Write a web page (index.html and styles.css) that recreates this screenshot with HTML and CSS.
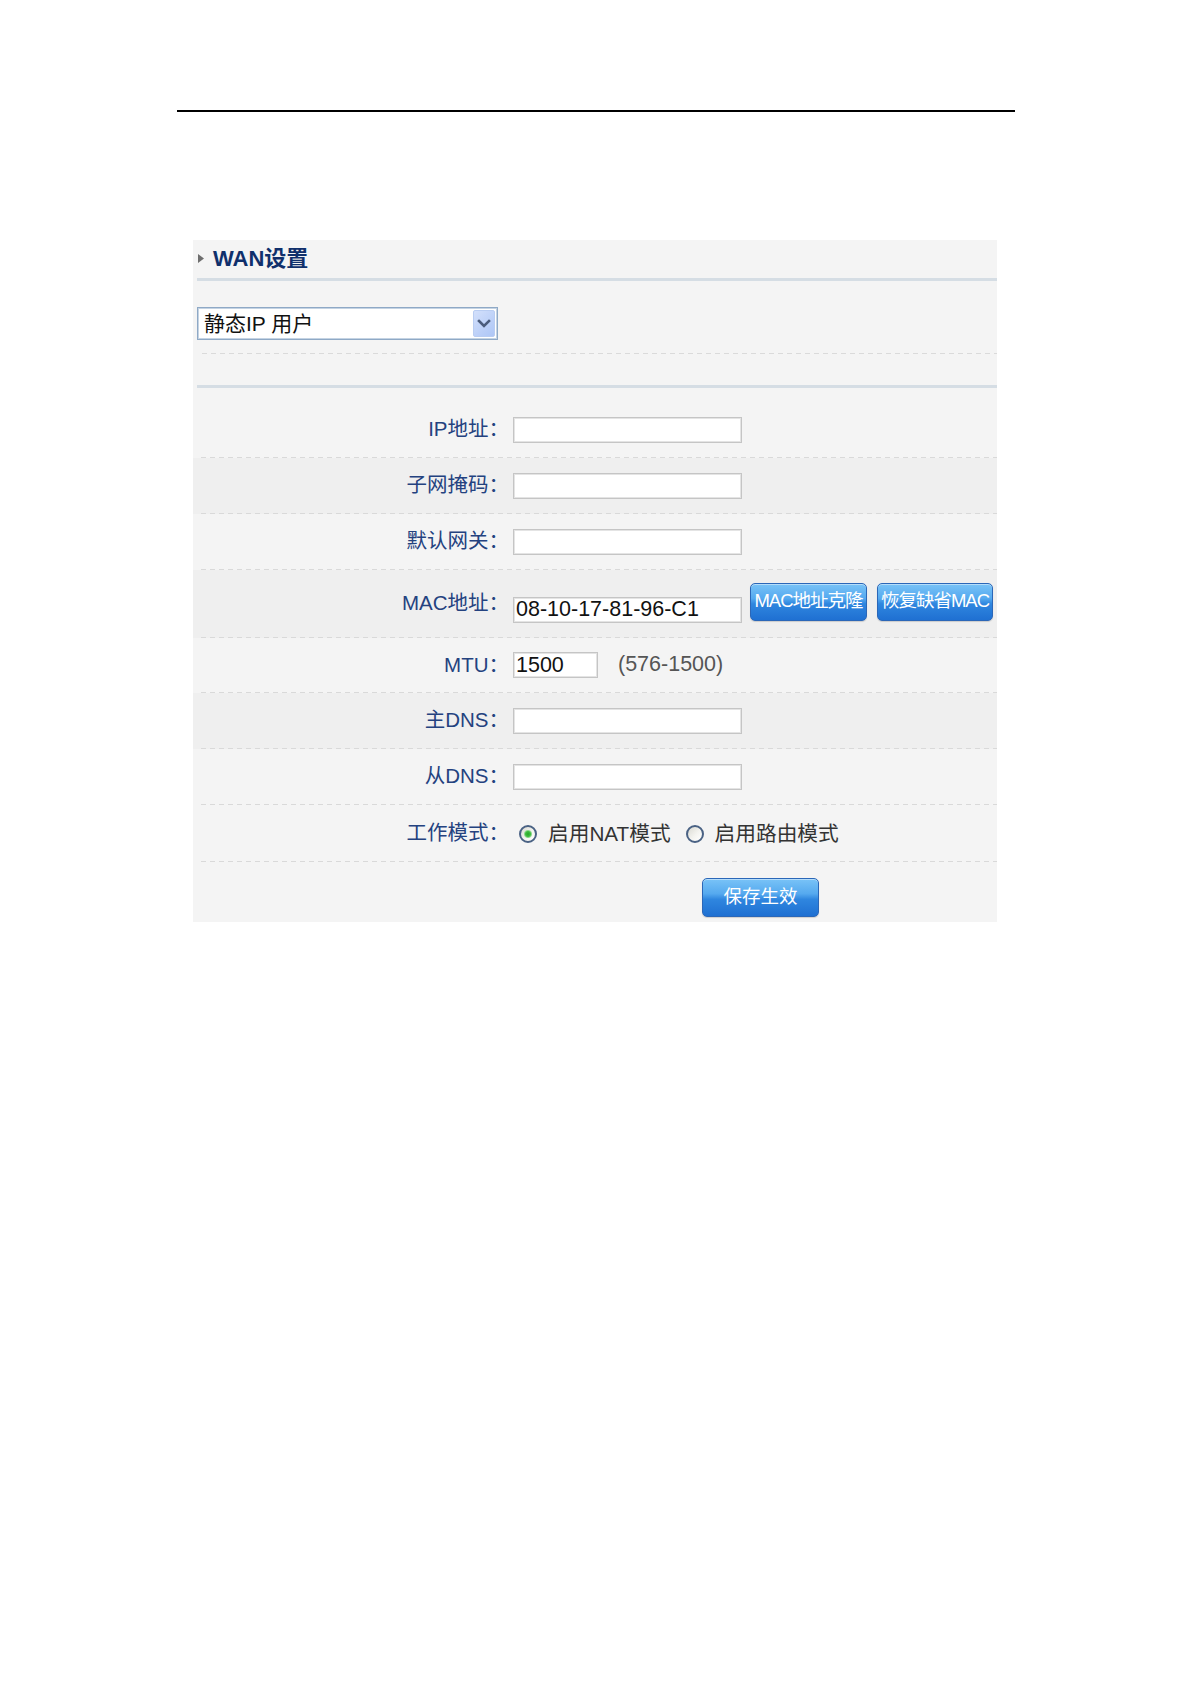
FILE: index.html
```html
<!DOCTYPE html>
<html lang="zh-CN">
<head>
<meta charset="utf-8">
<title>WAN设置</title>
<link rel="stylesheet" href="styles.css">
</head>
<body>
<div class="doc">
  <div class="rule"></div>
  <div class="panel">
    <div class="hd">
      <svg class="tri" width="6" height="9" viewBox="0 0 6 9"><path d="M0 0 L6 4.5 L0 9 Z" fill="#6e6e6e"/></svg>
      <span class="hd-title">WAN设置</span>
    </div>
    <div class="line-solid"></div>
    <div class="sel-area">
      <div class="select">
        <span class="sel-text">静态IP 用户</span>
        <span class="sel-btn"><svg width="22" height="27" viewBox="0 0 22 27"><path d="M6 11 L11 16 L16 11" fill="none" stroke="#4b5c7c" stroke-width="2.6" stroke-linecap="square"/></svg></span>
      </div>
    </div>
    <div class="dash"></div>
    <div class="gap"></div>
    <div class="line-solid"></div>

    <div class="row first">
      <div class="lbl">IP地址：</div>
      <div class="val"><input class="txt" type="text" value=""></div>
    </div>
    <div class="row alt">
      <div class="lbl">子网掩码：</div>
      <div class="val"><input class="txt" type="text" value=""></div>
    </div>
    <div class="row">
      <div class="lbl">默认网关：</div>
      <div class="val"><input class="txt" type="text" value=""></div>
    </div>
    <div class="row alt r-mac">
      <div class="lbl">MAC地址：</div>
      <div class="val">
        <input class="txt txt-down" type="text" value="08-10-17-81-96-C1">
        <button class="btn btn-mac" type="button">MAC地址克隆</button>
        <button class="btn btn-mac2" type="button">恢复缺省MAC</button>
      </div>
    </div>
    <div class="row r-mtu">
      <div class="lbl">MTU：</div>
      <div class="val"><input class="txt txt-short" type="text" value="1500"><span class="hint">(576-1500)</span></div>
    </div>
    <div class="row alt">
      <div class="lbl">主DNS：</div>
      <div class="val"><input class="txt" type="text" value=""></div>
    </div>
    <div class="row">
      <div class="lbl">从DNS：</div>
      <div class="val"><input class="txt" type="text" value=""></div>
    </div>
    <div class="row r-mode">
      <div class="lbl">工作模式：</div>
      <div class="val">
        <span class="radio on"></span><span class="opt-text">启用NAT模式</span>
        <span class="radio radio2"></span><span class="opt-text">启用路由模式</span>
      </div>
    </div>
    <div class="row save">
      <button class="btn btn-save" type="button">保存生效</button>
    </div>
  </div>
</div>
</body>
</html>
```

FILE: styles.css
```css
html, body {
  margin: 0;
  padding: 0;
  background: #ffffff;
}

body {
  font-family: "Liberation Sans", "Noto Sans CJK SC", sans-serif;
  font-size: 20px;
  color: #333;
}

.doc {
  padding-top: 110px;
}

.rule {
  margin-left: 177px;
  width: 838px;
  height: 2px;
  background: #000;
}

.panel {
  margin: 128px 0 0 193px;
  width: 804px;
  background: #f4f4f4;
}

.hd {
  height: 38px;
  display: flex;
  align-items: center;
  padding-left: 5px;
  box-sizing: border-box;
}

.tri {
  display: block;
  margin-top: -2px;
}

.hd-title {
  margin-left: 9px;
  font-size: 22px;
  font-weight: bold;
  color: #10306c;
  line-height: 1;
}

.line-solid {
  margin-left: 4px;
  height: 3px;
  background: #d5dde4;
}

.sel-area {
  padding: 26px 0 13px 4px;
}

.select {
  width: 301px;
  height: 33px;
  box-sizing: border-box;
  border: 1px solid #8fa9c6;
  box-shadow: inset 0 0 0 1px #c4d3e3;
  background: #fff;
  display: flex;
  align-items: center;
  justify-content: space-between;
  padding: 0 2px 0 6px;
}

.sel-text {
  font-size: 21px;
  color: #111;
  line-height: 1;
}

.sel-btn {
  display: block;
  width: 22px;
  height: 27px;
  box-sizing: border-box;
  border: 1px solid #b9cdf2;
  border-radius: 2px;
  background: linear-gradient(135deg, #d3e0fb 0%, #bcd0f8 60%, #aec6f6 100%);
}

.sel-btn svg {
  display: block;
  margin: -1px 0 0 -1px;
}

.dash {
  margin-left: 9px;
  height: 1px;
  background: repeating-linear-gradient(90deg, #dadada 0 5px, transparent 5px 9px);
}

.gap {
  height: 31px;
}

.row {
  display: flex;
  align-items: center;
  box-sizing: border-box;
  height: 56px;
  padding-bottom: 1px;
  background-color: #f4f4f4;
  background-image: repeating-linear-gradient(90deg, #d9d9d9 0 5px, transparent 5px 9px);
  background-position: 8px 100%;
  background-size: calc(100% - 8px) 1px;
  background-repeat: no-repeat;
}

.row.alt {
  background-color: #efefef;
}

.row.first {
  height: 70px;
  padding-top: 14px;
}

.row.r-mac {
  height: 68px;
}

.row.r-mtu {
  height: 55px;
}

.row.r-mode {
  height: 57px;
}

.row.save {
  height: 60px;
  background-image: none;
  align-items: flex-start;
  padding: 16px 0 0 509px;
}

.lbl {
  flex: none;
  width: 316px;
  text-align: right;
  color: #24427f;
  font-size: 20.5px;
  line-height: 1.2;
}

.val {
  margin-left: 4px;
  display: flex;
  align-items: center;
}

.txt {
  display: block;
  width: 229px;
  height: 26px;
  box-sizing: border-box;
  margin: 0;
  border: 1px solid #c5c5c5;
  box-shadow: inset 0 0 0 1px #e4e4e4;
  background: #fff;
  padding: 0 0 0 2px;
  font-family: "Liberation Sans", "Noto Sans CJK SC", sans-serif;
  font-size: 21.5px;
  color: #111;
  outline: none;
}

.txt-short {
  width: 85px;
}

.txt-down {
  margin-top: 12px;
}

.hint {
  margin-left: 20px;
  font-size: 21.5px;
  color: #555;
  line-height: 1.2;
}

.btn {
  display: block;
  margin: 0;
  box-sizing: border-box;
  width: 117px;
  height: 38px;
  padding: 0;
  border: 1px solid #2b67b8;
  border-radius: 5px;
  background: linear-gradient(180deg, #79c3f7 0%, #55a9ef 40%, #2f86df 55%, #1f70d2 100%);
  box-shadow: inset 0 1px 0 rgba(255, 255, 255, 0.45), 0 1px 1px rgba(0, 0, 0, 0.15);
  color: #fff;
  font-family: "Liberation Sans", "Noto Sans CJK SC", sans-serif;
  font-size: 18.5px;
  letter-spacing: -1px;
  line-height: 1;
  text-align: center;
}

.btn-mac {
  margin-left: 8px;
  margin-bottom: 4px;
}

.btn-mac2 {
  width: 116px;
  margin-left: 10px;
  margin-bottom: 4px;
}

.btn-save {
  height: 39px;
  letter-spacing: 0;
}

.radio {
  display: block;
  flex: none;
  width: 18px;
  height: 18px;
  box-sizing: border-box;
  margin-left: 6px;
  margin-top: 2px;
  border: 2px solid #4a6284;
  border-radius: 50%;
  background: linear-gradient(135deg, #d9d9d2 0%, #f4f4f0 55%, #ffffff 100%);
}

.radio.on {
  background: radial-gradient(circle at 50% 50%, #2aa52a 0, #3fbe3f 2.5px, #8bd88b 3.5px, transparent 4.5px),
    linear-gradient(135deg, #d9d9d2 0%, #f4f4f0 55%, #ffffff 100%);
}

.radio2 {
  margin-left: 15px;
}

.opt-text {
  margin-left: 11px;
  font-size: 20.7px;
  color: #333;
  line-height: 1.2;
  margin-top: 2px;
}
```
